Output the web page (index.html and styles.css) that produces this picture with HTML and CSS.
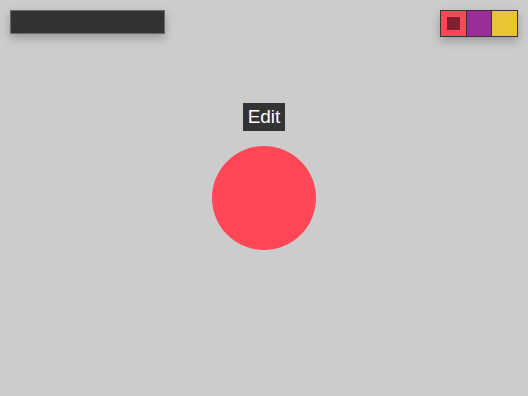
FILE: index.html
```html
<!DOCTYPE html>
<html lang="en">
<head>
    <meta charset="UTF-8">
    <title>Shape Editor</title>
    <link rel="stylesheet" href="styles.css">
</head>
<body>
    <div class="toolbar">
        <div class="name-bar"></div>
        <div class="palette">
            <div class="swatch red selected"><span class="mark"></span></div>
            <div class="swatch purple"></div>
            <div class="swatch yellow"></div>
        </div>
    </div>
    <div class="stage">
        <div class="label">Edit</div>
        <div class="shape"></div>
    </div>
</body>
</html>
```

FILE: styles.css
```css
body {
    margin: 0;
    background: #cccccc;
    font-family: "Liberation Sans", Arial, sans-serif;
    width: 528px;
    height: 396px;
    overflow: hidden;
}
.toolbar {
    display: flex;
    justify-content: space-between;
    align-items: flex-start;
    padding: 10px 10px 0 10px;
}
.name-bar {
    width: 153px;
    height: 22px;
    background: #333333;
    border: 1px solid #6a6a6a;
    box-shadow: 0 4px 10px rgba(0,0,0,0.25);
}
.palette {
    display: flex;
    gap: 1px;
    background: #3a3035;
    border: 1px solid #3a3035;
    box-shadow: 0 4px 10px rgba(0,0,0,0.25);
}
.swatch {
    width: 25px;
    height: 25px;
    display: flex;
    align-items: center;
    justify-content: center;
}
.red {
    background: #ff4757;
}
.purple {
    background: #9a2e97;
    width: 24px;
}
.yellow {
    background: #e8c532;
}
.mark {
    width: 13px;
    height: 13px;
    background: #7d2130;
}
.stage {
    display: flex;
    flex-direction: column;
    align-items: center;
    margin-top: 66px;
}
.label {
    background: #333333;
    color: #ffffff;
    font-size: 19px;
    line-height: 28px;
    height: 28px;
    padding: 0 5px;
}
.shape {
    width: 104px;
    height: 104px;
    border-radius: 50%;
    background: #ff4757;
    margin-top: 15px;
}
```
